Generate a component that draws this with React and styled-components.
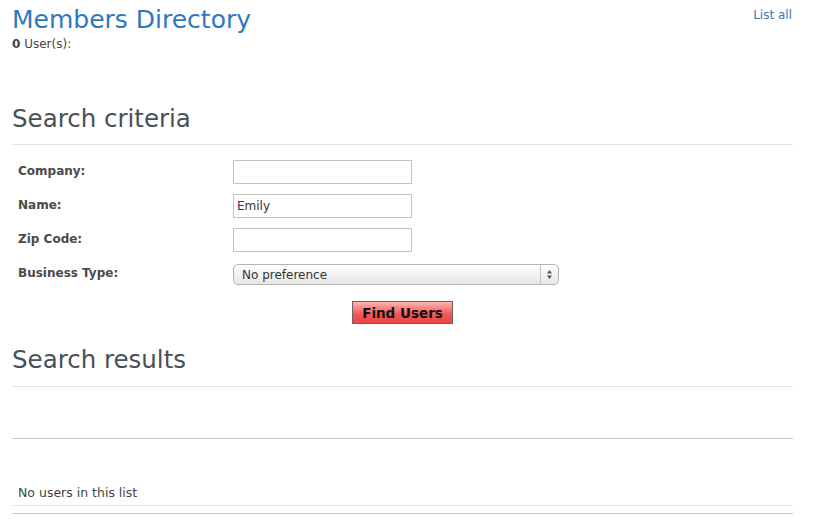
import React from "react";
import styled, { createGlobalStyle } from "styled-components";

const Global = createGlobalStyle`
  html, body { margin: 0; padding: 0; background: #fff; }
  body { font-family: "DejaVu Sans", "Open Sans", sans-serif; color: #444; }
`;

const Page = styled.div`
  width: 781px;
  margin-left: 12px;
`;

const TopBar = styled.div`
  display: flex;
  justify-content: space-between;
  align-items: flex-start;
`;

const Title = styled.h1`
  margin: 0;
  padding-top: 4px;
  font-size: 25px;
  font-weight: 400;
  line-height: 31px;
  color: #2f78bd;
`;

const Count = styled.div`
  font-size: 12px;
  line-height: 18px;
  color: #444;
  b { font-weight: 700; }
`;

const TopLink = styled.a`
  font-size: 12px;
  color: #3a78b0;
  text-decoration: none;
  margin-top: 8px;
  margin-right: 1px;
`;

const SectionTitle = styled.h2`
  margin: ${(p) => p.$top}px 0 0;
  font-size: 24.5px;
  font-weight: 400;
  line-height: 38px;
  color: #4a5056;
  padding-bottom: ${(p) => p.$pad}px;
  border-bottom: 1px solid #e2e2e2;
`;

const Form = styled.form`
  display: grid;
  grid-template-columns: 215px 1fr;
  row-gap: 10px;
  padding: 15px 0 0 6px;
  align-items: center;
`;

const Label = styled.label`
  font-size: 12px;
  font-weight: 700;
  color: #4a4a4a;
  line-height: 24px;
  position: relative;
  top: -1px;
`;

const TextInput = styled.input`
  box-sizing: border-box;
  width: 179px;
  height: 24px;
  border: 1px solid #c4c4c4;
  padding: 0 3px;
  font-family: "DejaVu Sans", "Open Sans", sans-serif;
  font-size: 12px;
  color: #333;
  outline: none;
`;

const SelectBox = styled.div`
  box-sizing: border-box;
  width: 326px;
  height: 21px;
  border: 1px solid #b3b3b3;
  border-radius: 5px;
  background: linear-gradient(#ffffff, #e6e6e6);
  display: flex;
  align-items: center;
  font-size: 12px;
  color: #333;
  margin-top: 1px;
`;

const SelectText = styled.span`
  flex: 1;
  padding-left: 8px;
`;

const SelectArrow = styled.span`
  width: 17px;
  height: 100%;
  border-left: 1px solid #c4c4c4;
  display: flex;
  align-items: center;
  justify-content: center;
`;

const ButtonRow = styled.div`
  grid-column: 1 / span 2;
  display: flex;
  justify-content: center;
  padding-top: 5px;
  margin-left: -6px;
`;

const FindButton = styled.button`
  box-sizing: border-box;
  width: 101px;
  height: 23px;
  border: 1px solid #666;
  background: linear-gradient(#ffb3b3, #f25555 60%, #ee4444);
  font-family: "DejaVu Sans", "Open Sans", sans-serif;
  font-weight: 700;
  font-size: 13.5px;
  color: #111;
  padding: 0;
`;

const Spacer = styled.div`
  height: ${(p) => p.$h}px;
  border-bottom: 1px solid ${(p) => p.$c};
`;

const EmptyText = styled.div`
  font-size: 12.5px;
  color: #444;
  padding: 0 0 4px 6px;
  line-height: 16px;
  border-bottom: 1px solid #e2e2e2;
`;

export default function App() {
  return (
    <>
      <Global />
      <Page>
        <TopBar>
          <div>
            <Title>Members Directory</Title>
            <Count>
              <b>0</b> User(s):
            </Count>
          </div>
          <TopLink href="#">List all</TopLink>
        </TopBar>

        <SectionTitle $top={47} $pad={6}>Search criteria</SectionTitle>
        <Form onSubmit={(e) => e.preventDefault()}>
          <Label>Company:</Label>
          <TextInput />
          <Label>Name:</Label>
          <TextInput defaultValue="Emily" />
          <Label>Zip Code:</Label>
          <TextInput />
          <Label>Business Type:</Label>
          <SelectBox>
            <SelectText>No preference</SelectText>
            <SelectArrow>
              <svg width="7" height="11" viewBox="0 0 7 11">
                <path d="M3.5 1 L6 4.5 H1 Z" fill="#555" />
                <path d="M3.5 10 L6 6.5 H1 Z" fill="#555" />
              </svg>
            </SelectArrow>
          </SelectBox>
          <ButtonRow>
            <FindButton type="submit">Find Users</FindButton>
          </ButtonRow>
        </Form>

        <SectionTitle $top={17} $pad={7}>Search results</SectionTitle>
        <Spacer $h={51} $c="#c8c8c8" />
        <Spacer $h={45} $c="transparent" />
        <EmptyText>No users in this list</EmptyText>
        <Spacer $h={7} $c="#c8c8c8" />
      </Page>
    </>
  );
}
